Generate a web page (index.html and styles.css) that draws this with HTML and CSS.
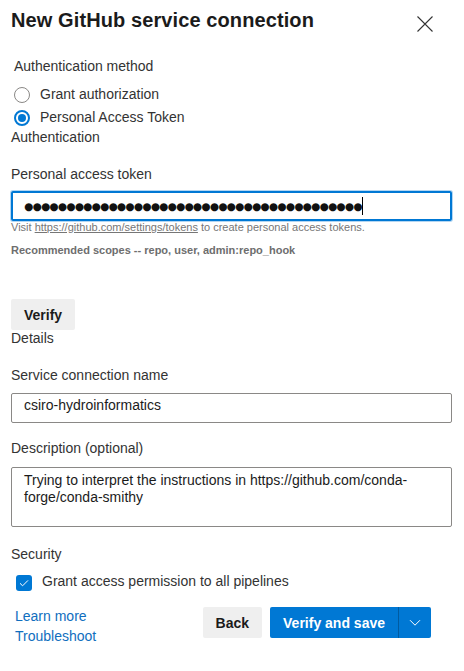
FILE: index.html
```html
<!DOCTYPE html>
<html lang="en">
<head>
<meta charset="utf-8">
<title>New GitHub service connection</title>
<link rel="stylesheet" href="styles.css">
</head>
<body>
<div class="panel">
  <header class="head">
    <h1 class="title">New GitHub service connection</h1>
    <button class="close" aria-label="Close">
      <svg width="16" height="16" viewBox="0 0 16 16"><path d="M0.5 0.5L15.5 15.5M15.5 0.5L0.5 15.5" stroke="#333" stroke-width="1.1" fill="none"/></svg>
    </button>
  </header>

  <div class="auth-method">
    <div class="group-label">Authentication method</div>
    <div class="radio-row"><span class="radio"></span><span>Grant authorization</span></div>
    <div class="radio-row"><span class="radio checked"></span><span>Personal Access Token</span></div>
  </div>
  <div class="section-title">Authentication</div>

  <div class="field field-token">
    <div class="label">Personal access token</div>
    <div class="input focused"><span class="dots">●●●●●●●●●●●●●●●●●●●●●●●●●●●●●●●●●●●●●●●●</span><span class="caret"></span></div>
    <div class="hint">Visit <span class="hint-link">https://github.com/settings/tokens</span> to create personal access tokens.</div>
    <div class="scopes">Recommended scopes -- repo, user, admin:repo_hook</div>
  </div>

  <button class="btn verify">Verify</button>
  <div class="section-title">Details</div>

  <div class="field field-name">
    <div class="label">Service connection name</div>
    <div class="input">csiro-hydroinformatics</div>
  </div>

  <div class="field field-desc">
    <div class="label">Description (optional)</div>
    <div class="textarea">Trying to interpret the instructions in https://github.com/conda-forge/conda-smithy</div>
  </div>

  <div class="field field-security">
    <div class="label">Security</div>
    <div class="check-row">
      <span class="checkbox"><svg width="16" height="16" viewBox="0 0 16 16"><path d="M4 8.3L6.6 10.8L12 5.4" stroke="#fff" stroke-width="1" fill="none"/></svg></span>
      <span>Grant access permission to all pipelines</span>
    </div>
  </div>

  <footer class="footer">
    <div class="links">
      <a class="link">Learn more</a>
      <a class="link">Troubleshoot</a>
    </div>
    <div class="actions">
      <button class="btn back">Back</button>
      <div class="split">
        <button class="btn primary">Verify and save</button>
        <span class="divider"></span>
        <button class="btn primary drop" aria-label="More">
          <svg width="12" height="8" viewBox="0 0 12 8"><path d="M1 1.2L6 6.2L11 1.2" stroke="#fff" stroke-width="1" fill="none"/></svg>
        </button>
      </div>
    </div>
  </footer>
</div>
</body>
</html>
```

FILE: styles.css
```css
* { box-sizing: border-box; }
html, body { margin: 0; padding: 0; background: #fff; }
body {
  font-family: "Liberation Sans", Arial, sans-serif;
  font-size: 14px;
  color: #333;
}
.panel {
  width: 464px;
  padding: 6px 12px 0 11px;
}
.head {
  display: flex;
  justify-content: space-between;
  align-items: flex-start;
}
.title {
  margin: 0;
  font-size: 20px;
  line-height: 28px;
  font-weight: bold;
  letter-spacing: 0.1px;
  color: #1b1b1b;
}
.close {
  margin: 10px 19px 0 0;
  padding: 0;
  border: 0;
  background: none;
  width: 16px;
  height: 16px;
  display: block;
}
.close svg { display: block; }

.auth-method {
  margin-top: 21.7px;
  padding-left: 3px;
}
.group-label { line-height: 20px; }
.radio-row {
  display: flex;
  align-items: center;
  gap: 10px;
  height: 23px;
  line-height: 20px;
}
.group-label + .radio-row { margin-top: 7px; }
.radio {
  width: 16px;
  height: 16px;
  border-radius: 50%;
  border: 1px solid #8a8886;
  position: relative;
  flex: none;
  margin-top: 1.5px;
}
.radio.checked {
  border: 2px solid #0078d4;
}
.radio.checked::after {
  content: "";
  position: absolute;
  left: 2px;
  top: 2px;
  width: 8px;
  height: 8px;
  border-radius: 50%;
  background: #0078d4;
}
.section-title {
  line-height: 16px;
}

.label { line-height: 20px; }
.field-token { margin-top: 19px; }
.field-token .label { margin-bottom: 7px; }

.input {
  height: 30px;
  border: 1px solid #8a8886;
  border-radius: 2px;
  padding: 1px 12px 0;
  line-height: 20px;
  color: #1b1b1b;
  display: flex;
  align-items: flex-start;
}
.input.focused {
  border: 2px solid #0078d4;
  box-shadow: 0 0 0 1px #b3d6f2;
  align-items: center;
  padding: 0 0 0 11px;
}
.dots {
  font-family: "DejaVu Sans", sans-serif;
  font-size: 10.5px;
  letter-spacing: -0.72px;
  color: #111;
  line-height: 20px;
}
.caret {
  width: 1px;
  height: 18px;
  background: #000;
  margin-left: 0;
}
.hint {
  font-size: 11px;
  line-height: 12px;
  color: #767676;
}
.hint-link { text-decoration: underline; }
.scopes {
  margin-top: 11.6px;
  font-size: 11px;
  line-height: 12px;
  font-weight: bold;
  color: #6e6e6e;
}

.btn {
  font-family: "Liberation Sans", Arial, sans-serif;
  font-size: 14px;
  font-weight: bold;
  border: 0;
  border-radius: 2px;
  background: #efefef;
  color: #1b1b1b;
  height: 31px;
  padding: 0 13px;
  display: block;
  cursor: pointer;
}
.verify { margin-top: 43px; }

.field-name { margin-top: 19px; }
.field-name .label { margin-bottom: 8px; }
.field-desc { margin-top: 15px; }
.field-desc .label { margin-bottom: 9px; }
.textarea {
  height: 60px;
  border: 1px solid #8a8886;
  border-radius: 2px;
  padding: 3.5px 12px 0;
  line-height: 17px;
  color: #1b1b1b;
}
.field-security { margin-top: 16.6px; }
.check-row {
  display: flex;
  align-items: flex-start;
  gap: 10px;
  padding-left: 5px;
  margin-top: 7.2px;
  line-height: 20px;
}
.checkbox {
  width: 16px;
  height: 16px;
  border-radius: 3px;
  background: #0078d4;
  margin-top: 4px;
  flex: none;
}
.checkbox svg { display: block; }

.footer {
  display: flex;
  justify-content: space-between;
  align-items: flex-start;
  margin-top: 15px;
  padding-left: 4px;
  padding-right: 21px;
}
.links {
  display: flex;
  flex-direction: column;
  line-height: 20px;
}
.link { color: #106ebe; text-decoration: none; }
.actions {
  display: flex;
  gap: 8px;
  margin-top: 1.4px;
}
.back { padding: 0 13px; }
.split { display: flex; }
.primary {
  background: #0078d4;
  color: #fff;
  border-radius: 2px 0 0 2px;
}
.divider {
  width: 1px;
  height: 31px;
  background: #005ba1;
}
.drop {
  width: 32px;
  padding: 0;
  border-radius: 0 2px 2px 0;
  display: flex;
  align-items: center;
  justify-content: center;
}
.drop svg { display: block; }
```
